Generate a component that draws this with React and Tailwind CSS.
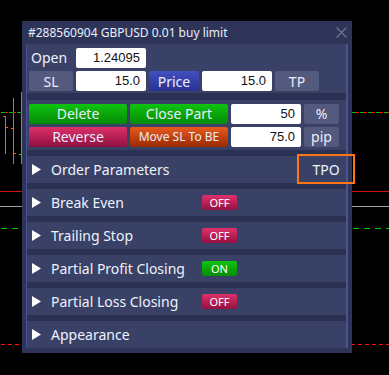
import React from "react";

const font = { fontFamily: '"Noto Sans", "Open Sans", sans-serif' };

function Chart() {
  return (
    <svg className="absolute inset-0" width="389" height="375" viewBox="0 0 389 375">
      <line x1="21.5" y1="92" x2="21.5" y2="164" stroke="#00e000" strokeWidth="1" />
      <line x1="19" y1="154.5" x2="22" y2="154.5" stroke="#00e000" strokeWidth="1" />
      <line x1="13.5" y1="98" x2="13.5" y2="164" stroke="#ff5a14" strokeWidth="1" />
      <line x1="5.5" y1="116" x2="5.5" y2="154" stroke="#ff5a14" strokeWidth="1" />
      <line x1="3" y1="116.5" x2="6" y2="116.5" stroke="#ff5a14" strokeWidth="1" />
      <line x1="5" y1="127.5" x2="8" y2="127.5" stroke="#ff5a14" strokeWidth="1" />
      <line x1="11" y1="128.5" x2="14" y2="128.5" stroke="#ff5a14" strokeWidth="1" />
      <line x1="13" y1="153.5" x2="16" y2="153.5" stroke="#ff5a14" strokeWidth="1" />
      <line x1="1" y1="112.5" x2="22" y2="112.5" stroke="#00c000" strokeWidth="1" strokeDasharray="5 3" />
      <line x1="5" y1="112.5" x2="22" y2="112.5" stroke="#ff1010" strokeWidth="1" strokeDasharray="3 5" />
      <line x1="352" y1="112.5" x2="389" y2="112.5" stroke="#00c000" strokeWidth="1" strokeDasharray="5 3" />
      <line x1="356" y1="112.5" x2="389" y2="112.5" stroke="#ff1010" strokeWidth="1" strokeDasharray="3 5" />
      <line x1="0" y1="191.5" x2="389" y2="191.5" stroke="#d01010" strokeWidth="1" />
      <line x1="0" y1="206.5" x2="389" y2="206.5" stroke="#9aa2ac" strokeWidth="1" />
      <line x1="1" y1="228.5" x2="389" y2="228.5" stroke="#00c800" strokeWidth="1" strokeDasharray="6 5" />
      <line x1="1" y1="344.5" x2="389" y2="344.5" stroke="#ff1010" strokeWidth="1" strokeDasharray="4 3" />
    </svg>
  );
}

function Btn({ children, className }) {
  return (
    <div className={"flex items-center justify-center rounded-[2px] text-[#e8eefc] " + className}>
      {children}
    </div>
  );
}

function Input({ value, w = "w-[70px]" }) {
  return (
    <div
      className={"h-[20px] bg-white rounded-[2px] flex items-center justify-end pr-[6px] text-[13px] text-[#111] " + w}
      style={{ fontFamily: '"Liberation Sans", Arial, sans-serif' }}
    >
      {value}
    </div>
  );
}

function Toggle({ on }) {
  return on ? (
    <div className="w-[35px] h-[15px] rounded-[2px] bg-gradient-to-b from-[#10c410] to-[#068c06] flex items-center justify-center text-[11px] text-white leading-none">
      ON
    </div>
  ) : (
    <div className="w-[35px] h-[15px] rounded-[2px] bg-gradient-to-b from-[#e0306a] to-[#951042] flex items-center justify-center text-[11px] text-white leading-none">
      OFF
    </div>
  );
}

function Row({ label, toggle }) {
  return (
    <div className="h-[27px] bg-[#3a4166] flex items-center">
      <svg width="9" height="11" viewBox="0 0 9 11" className="ml-[5px]">
        <polygon points="0,0 9,5.5 0,11" fill="#ffffff" />
      </svg>
      <span className="ml-[10px] text-[14px] text-[#eef2fc] w-[151px] leading-none">{label}</span>
      {toggle}
    </div>
  );
}

export default function App() {
  return (
    <div className="relative w-[389px] h-[375px] bg-black overflow-hidden" style={font}>
      <Chart />
      <div className="absolute left-[22px] top-[21px] w-[330px] h-[332px] bg-[#2e3458] flex flex-col">
        <div className="h-[23px] flex items-center pl-[6px] relative">
          <span className="text-[12px] text-[#e8eefc] leading-none">#288560904 GBPUSD 0.01 buy limit</span>
          <svg className="absolute left-[314px] top-[6px]" width="11" height="11" viewBox="0 0 11 11">
            <path d="M0.5 0.5 L10.5 10.5 M10.5 0.5 L0.5 10.5" stroke="#6d7394" strokeWidth="1.2" />
          </svg>
        </div>
        <div className="ml-[4px] w-[322px] h-[304px] border-l border-r-2 border-[#4a5292] bg-[#2b3153] flex flex-col">
          <div className="h-[49px] bg-[#3a4166] flex flex-col pt-[4px] pl-[2px] gap-[3px]">
            <div className="flex items-center h-[20px]">
              <span className="w-[47px] pl-[2px] text-[14px] text-[#eef2fc] leading-none">Open</span>
              <Input value="1.24095" />
            </div>
            <div className="flex items-center gap-[3px] h-[20px]">
              <Btn className="w-[44px] h-[20px] bg-[#545a7d] text-[14px]">SL</Btn>
              <Input value="15.0" />
              <Btn className="w-[50px] h-[20px] bg-gradient-to-b from-[#4250c0] to-[#2a3290] text-[14px]">Price</Btn>
              <Input value="15.0" />
              <Btn className="w-[44px] h-[20px] bg-[#545a7d] text-[14px]">TP</Btn>
            </div>
          </div>
          <div className="mt-[7px] h-[51px] bg-[#3a4166] flex flex-col pt-[4px] pl-[2px] gap-[3px]">
            <div className="flex items-center gap-[3px] h-[20px]">
              <Btn className="w-[98px] h-[20px] bg-gradient-to-b from-[#10c410] to-[#068a06] text-[14px]">Delete</Btn>
              <Btn className="w-[98px] h-[20px] bg-gradient-to-b from-[#10c410] to-[#068a06] text-[14px]">Close Part</Btn>
              <Input value="50" />
              <Btn className="w-[35px] h-[20px] bg-[#545a7d] text-[14px]">%</Btn>
            </div>
            <div className="flex items-center gap-[3px] h-[20px]">
              <Btn className="w-[98px] h-[20px] bg-gradient-to-b from-[#e0306a] to-[#8e1040] text-[14px]">Reverse</Btn>
              <Btn className="w-[98px] h-[20px] bg-gradient-to-b from-[#e85a1e] to-[#9a2a02] text-[12px]">Move SL To BE</Btn>
              <Input value="75.0" />
              <Btn className="w-[35px] h-[20px] bg-[#545a7d] text-[14px]">pip</Btn>
            </div>
          </div>
          <div className="mt-[6px] flex flex-col gap-[6px]">
            <div className="relative">
              <Row label="Order Parameters" />
              <div className="absolute left-[270px] top-[-2px] w-[58px] h-[30px] border-2 border-[#ff7414] flex items-center justify-center text-[14px] text-[#eef2fc]">
                TPO
              </div>
            </div>
            <Row label="Break Even" toggle={<Toggle />} />
            <Row label="Trailing Stop" toggle={<Toggle />} />
            <Row label="Partial Profit Closing" toggle={<Toggle on />} />
            <Row label="Partial Loss Closing" toggle={<Toggle />} />
            <Row label="Appearance" />
          </div>
        </div>
      </div>
    </div>
  );
}
